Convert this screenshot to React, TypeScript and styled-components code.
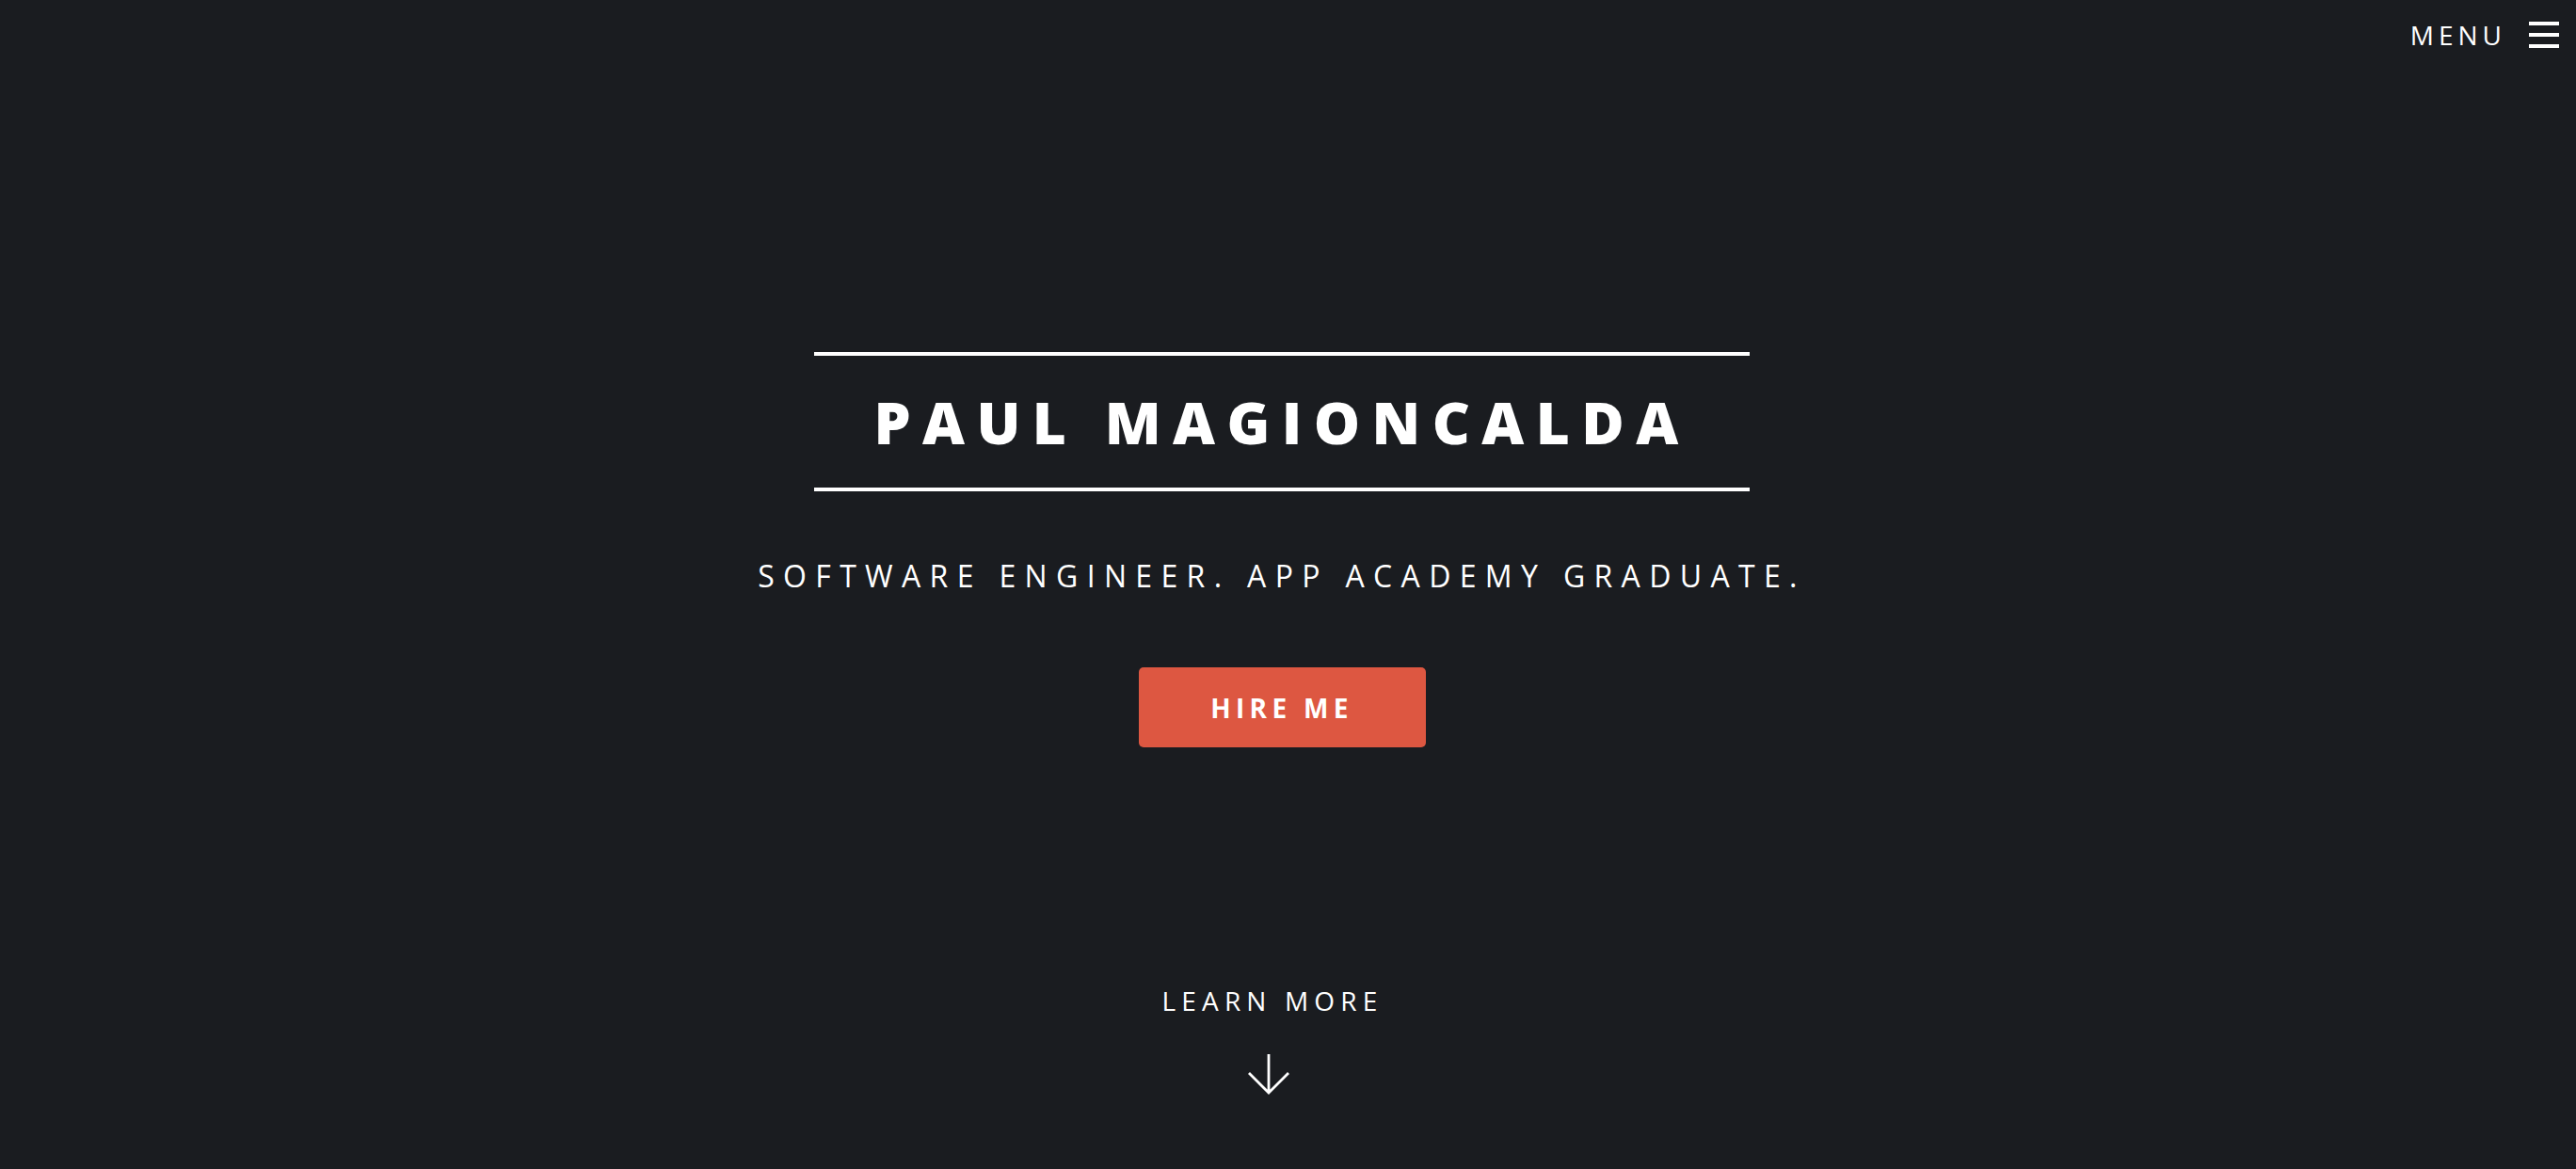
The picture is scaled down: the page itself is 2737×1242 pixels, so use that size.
import { FC } from 'react';
import styled, { createGlobalStyle } from 'styled-components';

const GlobalStyle = createGlobalStyle`
  html, body {
    margin: 0;
    padding: 0;
    background: #1a1c20;
  }

  body {
    font-family: 'Open Sans', 'Noto Sans', sans-serif;
    color: #ffffff;
    -webkit-font-smoothing: antialiased;
  }
`;

const App: FC = () => {
  return (
    <StyledPage>
      <GlobalStyle />
      <StyledHeader>
        <StyledMenu>
          <StyledMenuLabel>Menu</StyledMenuLabel>
          <StyledBurger>
            <span />
            <span />
            <span />
          </StyledBurger>
        </StyledMenu>
      </StyledHeader>

      <StyledHero>
        <StyledTitle>Paul Magioncalda</StyledTitle>
        <StyledTagline>Software Engineer. App Academy Graduate.</StyledTagline>
        <StyledButton>Hire Me</StyledButton>

        <StyledLearnMore>
          <StyledLearnLabel>Learn More</StyledLearnLabel>
          <StyledArrow width="44" height="44" viewBox="0 0 44 44" fill="none">
            <path
              d="M22 1V42M1 21L22 42L43 21"
              stroke="#ffffff"
              strokeWidth="2.8"
            />
          </StyledArrow>
        </StyledLearnMore>
      </StyledHero>
    </StyledPage>
  );
};

export default App;

const StyledPage = styled.div`
  min-height: 100vh;
  display: flex;
  flex-direction: column;
  background: #1a1c20;
`;

const StyledHeader = styled.header`
  display: flex;
  justify-content: flex-end;
  padding: 23px 18px 0 0;
`;

const StyledMenu = styled.div`
  display: flex;
  align-items: center;
  gap: 24px;
  cursor: pointer;
`;

const StyledMenuLabel = styled.span`
  font-size: 28px;
  line-height: 1;
  font-weight: 400;
  letter-spacing: 5px;
  text-transform: uppercase;
`;

const StyledBurger = styled.div`
  display: flex;
  flex-direction: column;
  justify-content: space-between;
  width: 32px;
  height: 28px;

  span {
    display: block;
    height: 4px;
    background: #ffffff;
  }
`;

const StyledHero = styled.section`
  display: flex;
  flex-direction: column;
  align-items: center;
  padding: 323px 13px 0 0;
`;

const StyledTitle = styled.h1`
  width: 994px;
  box-sizing: border-box;
  margin: 0;
  padding: 39px 0;
  border-top: 4px solid #ffffff;
  border-bottom: 4px solid #ffffff;
  text-align: center;
  font-size: 62px;
  line-height: 1;
  font-weight: 800;
  letter-spacing: 0.2em;
  text-transform: uppercase;
`;

const StyledTagline = styled.p`
  margin: 74px 0 0;
  font-size: 32px;
  line-height: 1;
  font-weight: 400;
  letter-spacing: 0.292em;
  text-transform: uppercase;
`;

const StyledButton = styled.button`
  margin-top: 81px;
  width: 305px;
  height: 85px;
  display: flex;
  align-items: center;
  justify-content: center;
  border: none;
  border-radius: 5px;
  background: #dd5741;
  color: #ffffff;
  font-family: 'Open Sans', sans-serif;
  font-size: 28px;
  line-height: 1;
  font-weight: 700;
  letter-spacing: 0.19em;
  text-transform: uppercase;
  cursor: pointer;
`;

const StyledLearnMore = styled.div`
  margin: 255px 20px 0 0;
  display: flex;
  flex-direction: column;
  align-items: center;
  gap: 42px;
`;

const StyledLearnLabel = styled.span`
  font-size: 28px;
  line-height: 1;
  font-weight: 400;
  letter-spacing: 0.22em;
  text-transform: uppercase;
`;

const StyledArrow = styled.svg`
  display: block;
  margin-right: 7px;
`;
